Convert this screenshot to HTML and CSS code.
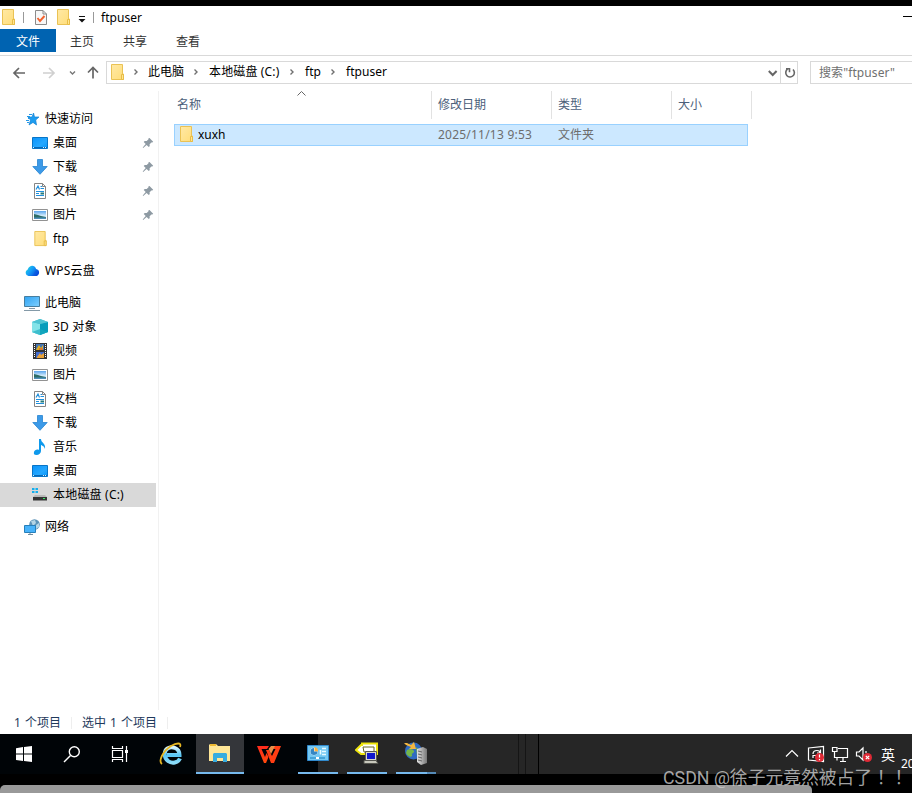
FILE: index.html
```html
<!DOCTYPE html>
<html lang="zh-CN">
<head>
<meta charset="utf-8">
<title>ftpuser</title>
<link rel="stylesheet" href="styles.css">
</head>
<body>
<svg class="defs" width="0" height="0">
  <defs>
    <linearGradient id="gf" x2="1" y2="1"><stop stop-color="#ffe9a6"/><stop offset="1" stop-color="#ffdd78"/></linearGradient>
    <linearGradient id="gb" x2="1" y2="1"><stop stop-color="#0a93fb"/><stop offset=".6" stop-color="#25a8ff"/><stop offset="1" stop-color="#0795fa"/></linearGradient>
    <linearGradient id="gpc" x2="1" y2="1"><stop stop-color="#2fa3f3"/><stop offset="1" stop-color="#7fd0ff"/></linearGradient>
    <linearGradient id="gcloud" x2="1" y2=".6"><stop stop-color="#25e0d5"/><stop offset=".5" stop-color="#139cf8"/><stop offset="1" stop-color="#0749d8"/></linearGradient>
    <linearGradient id="ge" y2="1" x2="0"><stop stop-color="#d5f4ff"/><stop offset=".5" stop-color="#57c6f5"/><stop offset="1" stop-color="#8bdcf9"/></linearGradient>
    <linearGradient id="gw" y2="1" x2="0"><stop stop-color="#ff2a1c"/><stop offset="1" stop-color="#ff4a0c"/></linearGradient>
    <linearGradient id="gsky" y2="1" x2="0"><stop stop-color="#5aa4ec"/><stop offset=".6" stop-color="#d9eefc"/></linearGradient>
    <linearGradient id="gt" x2="1" y2="0"><stop stop-color="#e2e2e2"/><stop offset="1" stop-color="#777"/></linearGradient>
  </defs>
  <symbol id="folder" viewBox="0 0 14 17"><path d="M1.500 .5h11v9.500h1v5.500h-12z" fill="url(#gf)" stroke="#eac254"/><path d="M11.500 15.500V10.500h2v5z" fill="#ffe591" stroke="#e8bd47"/></symbol>
  <symbol id="star" viewBox="0 0 16 16"><path d="M9.500 2l1 4H15l-3.300 3 .8 5-3.500-2.600L5 14l1.500-5L4 6h4z" fill="#1c9cf0" stroke="#1583d3" stroke-width=".7"/><path d="M5 3.500h3M3 5.500h3M4 7.500h2M2 9.500h3M3 11.500h2" stroke="#2398e7"/></symbol>
  <symbol id="desktop" viewBox="0 0 16 16"><path d="M.5 2.500h15v11H.5z" fill="url(#gb)" stroke="#0875c7"/><path d="M1 12.500h14" stroke="#0868b5"/><path d="M1 12.500h1m9 0h1m1 0h1" stroke="#d7f0ff"/></symbol>
  <symbol id="down" viewBox="0 0 16 16"><path d="M5.500.5h5v7h4.700L8 15.300.8 7.500h4.700z" fill="#3c9ae8" stroke="#2684d0" stroke-width=".8"/></symbol>
  <symbol id="doc" viewBox="0 0 16 16"><path d="M2.500.5h8l3 3v12h-11z" fill="#fff" stroke="#858585"/><path d="M10.500.5v3h3" fill="none" stroke="#858585"/><path d="M4 6.500L6 3l1.500 3.500M8.500 3.500H10m-1.500 2H12M4 8.500h8m-8 2h3m-3 2h8" stroke="#1f8fdc" stroke-width="1.200" fill="none"/><path d="M8.500 10.500H12" stroke="#287a78" stroke-width="2"/></symbol>
  <symbol id="picture" viewBox="0 0 16 16"><path d="M.5 2.500h15v11H.5z" fill="#fff" stroke="#929292"/><path d="M2 4h12v8H2z" fill="url(#gsky)"/><path d="M2 7l4 1 3 1 5 1v1H2z" fill="#2c6c67"/><path d="M2 10.500h12V12H2z" fill="#4f8eb9"/></symbol>
  <symbol id="cloud" viewBox="0 0 16 16"><path d="M4.500 13a3.400 3.400 0 0 1-.8-6.500C5.500 1.500 10.800 1.600 12.100 6a3.600 3.600 0 0 1 .4 7z" fill="url(#gcloud)"/><path d="M7 13c3 0 3-5 5.500-6a3.600 3.600 0 0 1 0 6z" fill="#0753df" opacity=".4"/></symbol>
  <symbol id="pc" viewBox="0 0 16 16"><path d="M.5 1.500h15v10H.5z" fill="url(#gpc)" stroke="#477e9f"/><path d="M5 13.500h6M0 15.500h16" stroke="#8499a7"/></symbol>
  <symbol id="cube" viewBox="0 0 16 16"><path d="M0 3l8-3 8 3v10l-8 3-8-3z" fill="#38bfd3"/><path d="M0 3l8 2v11l-8-3z" fill="#83e3e8"/><path d="M8 5l8-2v10l-8 3z" fill="#079dbb"/><path d="M0 3l8-3 8 3-8 2z" fill="#4fc4d2"/><path d="M0 13l8-3 8 3-8 3z" fill="#18aabf" opacity=".65"/></symbol>
  <symbol id="film" viewBox="0 0 16 16"><path d="M1 0h14v16H1z" fill="#343434"/><path d="M4 1h8v6H4z" fill="#4474b2"/><path d="M4 9h8v6H4z" fill="#416cd0"/><path d="M5 5l2-3 2 3 2-3v5H4z" fill="#dfae25"/><path d="M5 14l3-4 1 2 3-2v5H5z" fill="#eaa339"/><path d="M7 6h4" stroke="#d64c36"/><path d="M2.500 1v14m11-14v14" stroke="#fff" stroke-dasharray="1 1"/></symbol>
  <symbol id="music" viewBox="0 0 16 16"><path d="M7 0h2c0 4 5 4 4 10-1-3-2-3-4-4v6c0 2-2 4-4.500 4S1.500 15 2 13c.5-2 3-3 5-2z" fill="#0e99ec"/></symbol>
  <symbol id="drive" viewBox="0 0 16 16"><path d="M0 1h2.500v2H0zM3.500 1H6v2H3.500zM0 4h2.500v2H0zM3.500 4H6v2H3.500z" fill="#15aeec"/><path d="M3 8h10l2 2H1z" fill="#b8b8b8"/><path d="M1 10h14v3.500H1z" fill="#353535"/><path d="M11 11.500h2" stroke="#36ef65"/></symbol>
  <symbol id="network" viewBox="0 0 16 16"><circle cx="10.500" cy="5.500" r="5.300" fill="#5c93b8"/><path d="M7 2l4-1 1 3-3 3zm5 4l3-2v4l-3 2z" fill="#b4d5e5"/><path d="M.5 6.500h11v7H.5z" fill="#47b2fa" stroke="#267fba"/><path d="M4 15.500h5M6 14v1" stroke="#718c9e"/></symbol>
  <symbol id="pin" viewBox="0 0 12 12"><path d="M7.500 1l3.700 3.700-.9.900-1-.2L7.500 7.500 7.800 9l-1 1-2.200-2-3.400 3-.5-.5 3-3.400-2-2.100 1-1h2l2-2-.2-1z" fill="#8e9aa3"/></symbol>
  <symbol id="chev" viewBox="0 0 6 8"><path d="M1.500 1.500L4 4 1.500 6.500" fill="none" stroke="#707070" stroke-width="1.400"/></symbol>
</svg>
<div class="window">
  <div class="titlebar">
    <svg class="fold t1"><use href="#folder"/></svg><i class="vbar v1"></i>
    <svg class="check" viewBox="0 0 14 17"><path d="M1.500 1.500h7.500l3.500 3.500v10.500h-11z" fill="#f7f7f7" stroke="#8b8b8b"/><path d="M9 1.500V5h3.500" fill="none" stroke="#8b8b8b"/><path d="M3.500 9l2.500 3 4.500-5" fill="none" stroke="#f2622e" stroke-width="1.900"/></svg>
    <svg class="fold t2"><use href="#folder"/></svg>
    <svg class="more" viewBox="0 0 8 8"><path d="M1 1.500h6" stroke="#111"/><path d="M.5 4h7L4 7.500z" fill="#111"/></svg>
    <i class="vbar v2"></i><span class="caption">ftpuser</span><i class="minimize"></i>
  </div>
  <div class="tabs"><span class="file">文件</span><span>主页</span><span>共享</span><span>查看</span></div>
  <div class="address-row">
    <svg class="arrows" viewBox="0 0 106 28" fill="none" stroke-width="1.700"><path d="M25 15H14m5-5l-5 5 5 5" stroke="#666"/><path d="M43 15h11m-5-5l5 5-5 5" stroke="#d0d0d0"/><path d="M70 13.500l2.500 2.500 2.500-2.500" stroke="#777" stroke-width="1.400"/><path d="M93 20.500V9.500m-5 5l5-5 5 5" stroke="#666"/></svg>
    <div class="address"><svg class="fold"><use href="#folder"/></svg><svg class="chev c1"><use href="#chev"/></svg><span class="p1">此电脑</span><svg class="chev c2"><use href="#chev"/></svg><span class="p2">本地磁盘 (C:)</span><svg class="chev c3"><use href="#chev"/></svg><span class="p3">ftp</span><svg class="chev c4"><use href="#chev"/></svg><span class="p4">ftpuser</span>
      <svg class="addr-tools" viewBox="0 0 30 21" fill="none"><path d="M.8 9l3.900 4 3.900-4" stroke="#666" stroke-width="2"/><path d="M12.500 0v21" stroke="#d9d9d9"/><path d="M19.500 7.200a4.300 4.300 0 1 0 5.500.3M18 6.800h3.500v3.500" stroke="#666" stroke-width="1.600"/></svg>
    </div>
    <div class="search">搜索"ftpuser"</div>
  </div>
  <div class="main">
    <nav>
      <div class="root"><svg><use href="#star"/></svg>快速访问</div>
      <div><svg><use href="#desktop"/></svg>桌面<svg class="pin"><use href="#pin"/></svg></div>
      <div><svg><use href="#down"/></svg>下载<svg class="pin"><use href="#pin"/></svg></div>
      <div><svg><use href="#doc"/></svg>文档<svg class="pin"><use href="#pin"/></svg></div>
      <div><svg><use href="#picture"/></svg>图片<svg class="pin"><use href="#pin"/></svg></div>
      <div><svg><use href="#folder"/></svg>ftp</div>
      <div class="root group wide"><svg><use href="#cloud"/></svg>WPS云盘</div>
      <div class="root group"><svg><use href="#pc"/></svg>此电脑</div>
      <div class="wide"><svg><use href="#cube"/></svg>3D 对象</div>
      <div><svg><use href="#film"/></svg>视频</div>
      <div><svg><use href="#picture"/></svg>图片</div>
      <div><svg><use href="#doc"/></svg>文档</div>
      <div><svg><use href="#down"/></svg>下载</div>
      <div><svg><use href="#music"/></svg>音乐</div>
      <div><svg><use href="#desktop"/></svg>桌面</div>
      <div class="selected wide"><svg><use href="#drive"/></svg>本地磁盘 (C:)</div>
      <div class="root group"><svg><use href="#network"/></svg>网络</div>
    </nav>
    <section>
      <div class="headers"><span>名称<svg class="sort" viewBox="0 0 9 5"><path d="M.5 4.500l4-4 4 4" fill="none" stroke="#666"/></svg></span><span>修改日期</span><span>类型</span><span>大小</span></div>
      <div class="entry"><span class="name"><svg class="fold"><use href="#folder"/></svg>xuxh</span><span class="date">2025/11/13 9:53</span><span>文件夹</span></div>
    </section>
  </div>
  <div class="status"><span>1 个项目</span><i></i><span>选中 1 个项目</span><i></i></div>
  <div class="taskbar">
    <div class="dark">
      <div class="task"><svg width="16" height="16" viewBox="0 0 16 16" fill="#fff"><path d="M0 2.200L7 1v6.500H0zM8 1l8-1v7.500H8zM0 8.500h7V15l-7-1zM8 8.500h8V16l-8-1z"/></svg></div>
      <div class="task"><svg width="18" height="18" viewBox="0 0 18 18" fill="none" stroke="#fff" stroke-width="1.400"><circle cx="11.300" cy="6.700" r="5"/><path d="M7.500 10.500L1 17"/></svg></div>
      <div class="task"><svg width="18" height="16" viewBox="0 0 18 16" fill="none" stroke="#fff" stroke-width="1.200"><path d="M1.500 0v2.500h10V0M1.500 16v-2.500h10V16M1.500 4.500h10v7h-10zM15.500 0v16"/><path d="M14 4h3v3h-3z" fill="#fff" stroke="none"/></svg></div>
      <div class="task ie"><svg width="24" height="24" viewBox="0 0 24 24" fill="none"><path d="M21 16.500c-2 4.500-8 5.500-12 2.500S4.500 9 8.500 6.500 20.500 5.500 20.500 13H8" stroke="url(#ge)" stroke-width="4"/><path d="M3 22C-1 19 4 9 12 4c5-3 11-4 9 1" stroke="#e6b622" stroke-width="1.800"/></svg></div>
      <div class="task active"><svg width="22" height="20" viewBox="0 0 22 20"><path d="M0 2l1-1h6l2 2h12v15H0z" fill="#ffe697"/><path d="M1 2h6" stroke="#eeb932" stroke-width="2"/><path d="M4 19v-8l1-1h12l1 1v8h-4v-4H8v4z" fill="#38acdf"/></svg></div>
      <div class="task wps"><svg width="24" height="17" viewBox="0 0 24 17"><path d="M0 0h12l-2 3H4.500l3.500 8 1.500-4 2 4L9 17H7z" fill="url(#gw)"/><path d="M9 4h3l3 6 3.500-7H16l1-3h7l-7 17h-3z" fill="#ff3e13"/><path d="M11.500 3l2.500-3h4l-4 8z" fill="#e7904a"/></svg></div>
    </div>
    <div class="light">
      <div class="app a1"><svg width="22" height="16" viewBox="0 0 22 16"><path d="M.5.5h21v15H.5z" fill="#73c8f3" stroke="#3089cc"/><circle cx="7" cy="6.500" r="3.700" fill="#fff"/><path d="M7.500 2v4.500H11A4 4 0 0 0 7.500 2z" fill="#ffb13a"/><path d="M7 3a3.500 3.500 0 1 0 3.500 3.500H7z" fill="#3487c4"/><path d="M15 3.500h4m-4 3h4m-4 3h4M13.500 5v4.500" stroke="#e9faff" stroke-width="1.600"/><path d="M3 13h15" stroke="#187eba"/><path d="M9 12h3v2H9z" fill="#fff"/></svg></div>
      <div class="app a2"><svg width="24" height="23" viewBox="0 0 24 23"><path d="M1 8l5-5h1V1.500h15V12H6z" fill="#fff" stroke="#eee50d" stroke-width="2"/><path d="M8 5h11v5H9z" fill="#fff" stroke="#686820"/><path d="M10.500 9.500h11v9h-11z" fill="#d8d8cc" stroke="#595950"/><path d="M12 11h8v6h-8z" fill="#1018cd"/><path d="M9 18.500h12l2 3H9z" fill="#c8c8bc" stroke="#55554f"/></svg></div>
      <div class="app a3"><svg width="25" height="25" viewBox="0 0 25 25"><circle cx="9.500" cy="10" r="8.500" fill="#306bc2"/><path d="M3 9c3-2 6-1 7 1s-3 2-2 4-4 3-6-2zm9-3l4 4-3 5z" fill="#74b64a"/><path d="M0 2h3l4 2 3-3 2 7H5l2-2-5-2z" fill="#f4b740"/><path d="M13 8l6-2 4 2v14l-6 2-4-3z" fill="url(#gt)"/><path d="M14 10l4 1m-4 2l4 1m-4 2l4 1m-4 2l4 1" stroke="#666"/></svg></div>
      <i class="seam s1"></i><i class="seam s2"></i><i class="seam s3"></i>
      <svg class="tray" viewBox="0 0 112 24" fill="none" stroke="#fff" stroke-width="1.200"><path d="M6 14.500l6-6 6 6"/><path d="M28.500 6l15-1.500v15l-15-1.500z"/><path d="M33 16v-2.500h3m-3-1.500c0-2 1.500-3.500 4-3.500 2 0 3 1 3 2.500m.5-3.500V11H37"/><circle cx="39.500" cy="15.500" r="4.500" fill="#df2935" stroke="none"/><path d="M39.500 12.500v3m0 1.500v1.200"/><path d="M58 6.500h9.500v9H57m3 4h6m-3-4v4M52.500 5.500v4h4.500v-4zM54.500 10v5.500H57v3"/><path d="M76.500 10H79l4-4v12l-4-4h-2.500zM86 9v2"/><circle cx="87.500" cy="15.500" r="4.500" fill="#df2935" stroke="none"/><path d="M85.800 13.800l3.400 3.400m0-3.400l-3.400 3.400"/></svg>
      <span class="ime">英</span><span class="clock">20</span>
    </div>
  </div>
  <div class="bottom"><i></i></div>
  <div class="watermark">CSDN @徐子元竟然被占了<span lang="zh-TW">！！</span></div>
</div>
</body>
</html>
```
FILE: styles.css
```css
* { box-sizing: border-box; }
body { margin: 0; overflow: hidden; background: #fff; font: 12px "Noto Sans", "Noto Sans CJK SC", sans-serif; color: #000; }
svg { display: block; flex: none; }
i { display: block; flex: none; }
span { white-space: nowrap; }
.defs { position: absolute; }
.window { width: 912px; height: 793px; position: relative; overflow: hidden; display: flex; flex-direction: column; border-top: 6px solid #000; }
.window > div { flex: none; }
.fold { width: 14px; height: 17px; }
.titlebar { height: 23px; display: flex; align-items: center; padding-left: 1px; }
.vbar { width: 1px; height: 11px; background: #999; }
.v1 { margin-left: 8px; }
.check { width: 14px; height: 17px; margin-left: 10px; }
.t2 { margin-left: 8px; }
.more { width: 8px; height: 8px; margin: 3px 7px 0 8px; }
.caption { margin-left: 7px; letter-spacing: .05px; }
.minimize { width: 9px; height: 1px; margin-left: auto; margin-top: -2px; background: #000; }
.tabs { height: 27px; display: flex; border-bottom: 1px solid #d9d9d9; color: #333; }
.tabs span { width: 53px; height: 23px; line-height: 25px; text-align: center; }
.tabs .file { width: 56px; background: #0063b1; color: #fff; }
.tabs span:nth-child(n+2) { position: relative; left: -.5px; }
.address-row { height: 28px; margin-top: 2px; display: flex; align-items: center; }
.arrows { width: 106px; height: 28px; }
.address { width: 692px; height: 23px; display: flex; align-items: center; border: 1px solid #d9d9d9; padding-left: 3px; line-height: 20px; }
.address .chev { width: 6px; height: 8px; margin: 0 10px 0 8px; }
.address .c1 { margin: 0 9px; }
.p1 { width: 37px; }
.p2 { width: 72px; letter-spacing: .15px; }
.p3 { width: 17px; }
.p4 { letter-spacing: .05px; }
.addr-tools { width: 30px; height: 21px; margin-left: auto; position: relative; left: 1px; }
.search { width: 102px; height: 23px; line-height: 21px; margin-left: 12px; padding-left: 8px; border: 1px solid #d9d9d9; border-right: 0; color: #707070; white-space: nowrap; letter-spacing: .1px; }
.main { height: 624px; display: flex; padding-top: 5px; }
nav { width: 159px; border-right: 1px solid #f1f1f1; padding-top: 16px; }
nav div { height: 24px; width: 156px; display: flex; align-items: center; gap: 5px; padding: 0 2px 1px 32px; line-height: 23px; }
nav svg { width: 16px; height: 16px; }
nav .root { padding-left: 24px; }
nav .group { margin-top: 8px; }
nav .pin { width: 12px; height: 12px; margin-left: auto; }
nav .wide { letter-spacing: .2px; }
.selected { background: #d9d9d9; }
section { width: 753px; }
.headers { height: 28px; display: flex; padding-left: 12px; color: #4c607a; }
.headers span { position: relative; width: 120px; height: 28px; line-height: 28px; padding-left: 6px; border-right: 1px solid #e2e2e2; }
.headers span:first-child { width: 261px; }
.headers span:last-child { width: 80px; }
.sort { position: absolute; left: 126px; top: 0; width: 9px; height: 5px; }
.entry { width: 574px; height: 22px; margin: 5px 0 0 15px; display: flex; align-items: flex-start; background: #cce8ff; border: 1px solid #99d1ff; color: #6d6d6d; line-height: 20px; }
.name { width: 263px; padding-left: 4px; display: flex; align-items: flex-start; gap: 5px; color: #000; }
.name svg { margin-top: 1px; }
.date { width: 120px; letter-spacing: .22px; }
.status { height: 24px; display: flex; align-items: center; padding: 2px 0 0 14px; color: #1e395b; line-height: 22px; word-spacing: 1px; }
.status i { width: 1px; height: 12px; margin: 0 10px; background: #eee; }
.taskbar { height: 40px; display: flex; background: #000407; }
.dark { width: 293px; display: flex; }
.task { flex: none; width: 48px; height: 40px; display: flex; align-items: center; justify-content: center; }
.ie { width: 52px; padding-left: 2px; }
.wps { padding-left: 2px; }
.active { background: #34363a; border-bottom: 2px solid #76b9ed; }
.light { position: relative; width: 619px; display: flex; background: linear-gradient(90deg, #000407 25px, #262626 25px); }
.light > * { flex: none; }
.app { width: 40px; height: 40px; border-bottom: 2px solid #76b9ed; display: flex; align-items: center; justify-content: center; margin-right: 9px; }
.a1 { margin-left: 5px; }
.a3 { margin-right: 0; border-image: linear-gradient(90deg, #76b9ed 78%, #558ab7 78%) 0 0 2 0; }
.seam { width: 1px; height: 40px; background: #151515; }
.s1 { margin-left: 82px; }
.s2 { margin-left: 6px; }
.s3 { margin-left: 12px; background: #000; }
.tray { width: 112px; height: 24px; margin: 8px 0 0 241px; }
.ime { color: #fff; font-size: 14px; line-height: 41px; margin-left: -11px; }
.clock { color: #fff; font-size: 12px; line-height: 12px; margin: 24px 0 0 6px; }
.bottom { height: 19px; padding-top: 11px; background: #000; }
.bottom i { width: 812px; height: 8px; background: #999; border-radius: 5px 5px 0 0; }
.watermark { position: absolute; left: 663px; top: 760px; color: rgba(205, 205, 205, .8); font: 17.8px/20px Roboto, "Noto Sans CJK SC", sans-serif; white-space: nowrap; }
.watermark span { font-family: "Noto Sans CJK TC", sans-serif; }
```
